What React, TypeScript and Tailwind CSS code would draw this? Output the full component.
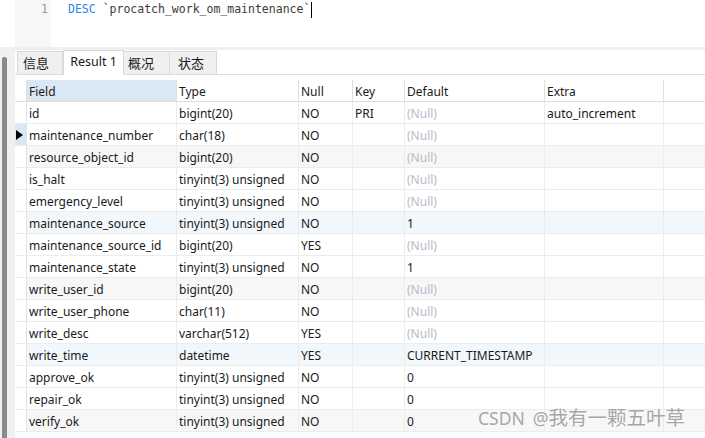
import React from "react";

type Row = [string, string, string, string, string, string];

const rows: Row[] = [
  ["id", "bigint(20)", "NO", "PRI", "(Null)", "auto_increment"],
  ["maintenance_number", "char(18)", "NO", "", "(Null)", ""],
  ["resource_object_id", "bigint(20)", "NO", "", "(Null)", ""],
  ["is_halt", "tinyint(3) unsigned", "NO", "", "(Null)", ""],
  ["emergency_level", "tinyint(3) unsigned", "NO", "", "(Null)", ""],
  ["maintenance_source", "tinyint(3) unsigned", "NO", "", "1", ""],
  ["maintenance_source_id", "bigint(20)", "YES", "", "(Null)", ""],
  ["maintenance_state", "tinyint(3) unsigned", "NO", "", "1", ""],
  ["write_user_id", "bigint(20)", "NO", "", "(Null)", ""],
  ["write_user_phone", "char(11)", "NO", "", "(Null)", ""],
  ["write_desc", "varchar(512)", "YES", "", "(Null)", ""],
  ["write_time", "datetime", "YES", "", "CURRENT_TIMESTAMP", ""],
  ["approve_ok", "tinyint(3) unsigned", "NO", "", "0", ""],
  ["repair_ok", "tinyint(3) unsigned", "NO", "", "0", ""],
  ["verify_ok", "tinyint(3) unsigned", "NO", "", "0", ""],
];

const rowBg = [
  "bg-white",
  "bg-white",
  "bg-[#f7f7f7]",
  "bg-white",
  "bg-white",
  "bg-[#f2f7fc]",
  "bg-white",
  "bg-white",
  "bg-[#f7f7f7]",
  "bg-white",
  "bg-white",
  "bg-[#f2f7fc]",
  "bg-white",
  "bg-white",
  "bg-[#f7f7f7]",
];

const widths = ["w-[150px]", "w-[122px]", "w-[54px]", "w-[52px]", "w-[140px]", "w-[119px]"];
const headers = ["Field", "Type", "Null", "Key", "Default", "Extra"];

export default function App() {
  return (
    <div
      className="relative w-[705px] h-[438px] overflow-hidden bg-white text-[12px] text-[#1a1a1a]"
      style={{ fontFamily: '"Noto Sans", "Noto Sans CJK SC", sans-serif' }}
    >
      {/* Editor */}
      <div className="flex h-[47px]">
        <div className="w-[15px] bg-white" />
        <div className="w-[36px] bg-[#f7f7f7] flex justify-end pr-[3px] pt-[1px]">
          <span
            className="text-[11.5px] leading-[16px] text-[#9a9a9a]"
            style={{ fontFamily: '"DejaVu Sans Mono", monospace' }}
          >
            1
          </span>
        </div>
        <div
          className="flex items-start pl-[17px] pt-[1px] text-[11.5px] leading-[16px] text-[#3a3a3a]"
          style={{ fontFamily: '"DejaVu Sans Mono", monospace' }}
        >
          <span className="text-[#2f82e6]">DESC</span>
          <span className="whitespace-pre"> `procatch_work_om_maintenance`</span>
          <span className="ml-[1px] mt-[1px] w-[1px] h-[16px] bg-black" />
        </div>
      </div>
      <div className="h-[3px] bg-[#efefef]" />

      {/* Body */}
      <div className="flex h-[388px]">
        <div className="w-[15px] bg-[#f0f0f0] pt-[7px] pl-[2px]">
          <div className="w-[5px] h-[400px] bg-[#8a8a8a] rounded-t-[2px]" />
        </div>
        <div className="flex-1 flex flex-col">
          {/* Tabs */}
          <div className="flex items-end h-[25px] border-b border-[#dcdcdc] pl-[2px] text-[13px]">
            <div className="w-[46px] h-[23px] bg-[#f0f0f0] border border-b-0 border-[#d9d9d9] flex items-center pl-[5px] leading-none">
              信息
            </div>
            <div className="w-[61px] h-[25px] bg-white border border-b-0 border-[#d9d9d9] flex items-center justify-center leading-none -mb-[1px] pb-[1px] text-[12.5px]">
              Result 1
            </div>
            <div className="w-[46px] h-[23px] bg-[#f0f0f0] border border-b-0 border-l-0 border-[#d9d9d9] flex items-center pl-[4px] leading-none">
              概况
            </div>
            <div className="w-[47px] h-[23px] bg-[#f0f0f0] border border-b-0 border-l-0 border-[#d9d9d9] flex items-center pl-[8px] leading-none">
              状态
            </div>
          </div>

          {/* Table */}
          <div className="pt-[5px]">
            <div className="flex h-[22px] border-b border-[#dedede]">
              <div className="w-[12px] border-r border-[#dedede] bg-white" />
              {headers.map((h, i) => (
                <div
                  key={h}
                  className={`${widths[i]} h-full border-r border-[#dedede] flex items-center pl-[2px] pt-[3px] leading-none ${
                    i === 0 ? "bg-[#dae8f6]" : "bg-white"
                  }`}
                >
                  {h}
                </div>
              ))}
            </div>
            {rows.map((r, ri) => (
              <div key={ri} className={`flex h-[22px] border-b border-[#ececec] ${rowBg[ri]}`}>
                <div
                  className={`w-[12px] h-full border-r border-[#e2e2e2] flex items-center justify-center ${
                    ri === 1 ? "bg-[#dae8f6]" : "bg-white"
                  }`}
                >
                  {ri === 1 && (
                    <svg width="7" height="10" viewBox="0 0 7 10" className="-ml-[3px] mt-[1px]">
                      <polygon points="0,0 7,5 0,10" fill="#000" />
                    </svg>
                  )}
                </div>
                {r.map((c, ci) => (
                  <div
                    key={ci}
                    className={`${widths[ci]} h-full border-r border-[#ececec] flex items-center pl-[2px] pt-[3px] leading-none whitespace-nowrap overflow-hidden ${
                      c === "(Null)" ? "text-[#b4bccb]" : ""
                    }`}
                  >
                    {c}
                  </div>
                ))}
              </div>
            ))}
          </div>
        </div>
      </div>

      {/* Watermark */}
      <div
        className="absolute left-[478px] top-[406px] flex items-baseline leading-[24px] text-[#a6a6a6] whitespace-nowrap"
        style={{ fontFamily: '"Noto Sans", "Noto Sans CJK SC", sans-serif', textShadow: "0 0 2px #fff" }}
      >
        <span className="text-[17.5px]">CSDN</span>
        <span className="text-[17.5px] ml-[8px]">@</span>
        <span className="text-[19.5px]">我有一颗五叶草</span>
      </div>
    </div>
  );
}
